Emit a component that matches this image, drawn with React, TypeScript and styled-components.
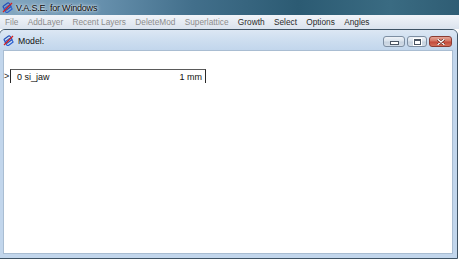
import React from "react";
import styled, { createGlobalStyle } from "styled-components";

const GlobalStyle = createGlobalStyle`
  html, body {
    margin: 0;
    padding: 0;
    background: #ffffff;
  }
  body {
    width: 459px;
    height: 261px;
    overflow: hidden;
    font-family: "Liberation Sans", Arial, sans-serif;
  }
`;

const Frame = styled.div`
  width: 459px;
  height: 261px;
  display: flex;
  flex-direction: column;
  overflow: hidden;
  background: #ffffff;
`;

const TitleBar = styled.div`
  height: 15px;
  display: flex;
  align-items: center;
  gap: 3px;
  padding-left: 2px;
  background: linear-gradient(
    to right,
    #86a9c2 0%,
    #6a93b0 20%,
    #426f8b 42%,
    #2c5b73 65%,
    #3a6b82 85%,
    #2f5d74 100%
  );
`;

const TitleText = styled.span`
  font-size: 9px;
  letter-spacing: -0.2px;
  color: #0a0a0a;
  text-shadow: 0 0 4px rgba(255, 255, 255, 0.9), 0 0 2px rgba(255, 255, 255, 0.9);
  white-space: nowrap;
`;

const MenuBar = styled.div`
  height: 14px;
  display: flex;
  align-items: center;
  gap: 9.3px;
  padding-left: 5px;
  background: linear-gradient(to bottom, #f1f4f9 0%, #e4eaf2 60%, #dbe3ee 100%);
`;

const MenuItem = styled.span<{ $disabled?: boolean }>`
  font-size: 8.3px;
  font-weight: 400;
  color: ${(p) => (p.$disabled ? "#8c8c8c" : "#2a2a2a")};
  white-space: nowrap;
`;

const Workspace = styled.div`
  flex: 1;
  display: flex;
  flex-direction: column;
  background: #ffffff;
`;

const MdiChild = styled.div`
  box-sizing: border-box;
  margin-left: -1px;
  width: 459px;
  height: 230px;
  border: 1px solid #3f5364;
  border-radius: 6px 6px 0 0;
  background: #c2d6ec;
  display: flex;
  flex-direction: column;
  padding: 0 4px 4px 3px;
`;

const ChildCaption = styled.div`
  height: 20px;
  margin: 0 -4px 0 -3px;
  padding: 0 5px 0 3px;
  display: flex;
  align-items: center;
  gap: 4px;
  border-radius: 5px 5px 0 0;
  background: linear-gradient(to bottom, #dce7f4 0%, #cfdff0 45%, #c2d6ec 100%);
`;

const CaptionText = styled.span`
  font-size: 8.7px;
  color: #111;
  flex: 1;
  padding-top: 1px;
`;

const CaptionButtons = styled.div`
  display: flex;
  gap: 2px;
  align-items: center;
  margin-top: 3px;
`;

const CaptionButton = styled.div<{ $close?: boolean; $w: number }>`
  box-sizing: border-box;
  width: ${(p) => p.$w}px;
  height: 11px;
  border: 1px solid ${(p) => (p.$close ? "#8a3c33" : "#7d8ea2")};
  border-radius: 3px;
  display: flex;
  align-items: center;
  justify-content: center;
  background: ${(p) =>
    p.$close
      ? "linear-gradient(to bottom, #e3a496 0%, #d47563 45%, #c2493a 55%, #d3705a 100%)"
      : "linear-gradient(to bottom, #eef2f7 0%, #dae3ed 45%, #c6d2df 55%, #d3dde8 100%)"};
`;

const MinGlyph = styled.div`
  width: 7px;
  height: 2px;
  background: #ffffff;
  border: 1px solid #4a5563;
  margin-top: 3px;
`;

const MaxGlyph = styled.div`
  width: 5px;
  height: 3px;
  border: 1px solid #4a5563;
  border-top-width: 2px;
  background: #ffffff;
  box-shadow: 0 0 0 1px #ffffff;
`;

const ClientArea = styled.div`
  flex: 1;
  background: #ffffff;
  border: 1px solid #a9bdd2;
  box-sizing: border-box;
  padding-top: 18px;
`;

const LayerRow = styled.div`
  display: flex;
  align-items: flex-start;
  height: 14px;
`;

const Pointer = styled.span`
  width: 6px;
  font-size: 9px;
  color: #222;
  line-height: 13px;
  padding-top: 1px;
`;

const LayerBox = styled.div`
  box-sizing: border-box;
  width: 196px;
  height: 14px;
  border: 1px solid #2a2a2a;
  border-bottom: none;
  border-top-color: #5a5a5a;
  display: flex;
  justify-content: space-between;
  align-items: center;
  padding: 1px 3px 0 6px;
  font-size: 9px;
  color: #111;
`;

const AppIcon = () => (
  <svg width="11" height="11" viewBox="0 0 11 11">
    <rect x="1.5" y="2" width="7" height="5" rx="1" transform="rotate(-35 5 4.5)" fill="none" stroke="#2450b8" strokeWidth="1.2" />
    <rect x="2.5" y="4.5" width="7" height="5" rx="1" transform="rotate(-35 6 7)" fill="none" stroke="#2a5fd0" strokeWidth="1.2" />
    <line x1="1" y1="10" x2="10" y2="1" stroke="#d42020" strokeWidth="1.3" />
  </svg>
);

const CloseGlyph = () => (
  <svg width="8" height="6" viewBox="0 0 8 6">
    <path d="M1 0.5 L7 5.5 M7 0.5 L1 5.5" stroke="#5a1a14" strokeWidth="2.6" strokeLinecap="round" />
    <path d="M1 0.5 L7 5.5 M7 0.5 L1 5.5" stroke="#ffffff" strokeWidth="1.4" strokeLinecap="round" />
  </svg>
);

const menus: { label: string; disabled: boolean }[] = [
  { label: "File", disabled: true },
  { label: "AddLayer", disabled: true },
  { label: "Recent Layers", disabled: true },
  { label: "DeleteMod", disabled: true },
  { label: "Superlattice", disabled: true },
  { label: "Growth", disabled: false },
  { label: "Select", disabled: false },
  { label: "Options", disabled: false },
  { label: "Angles", disabled: false },
];

export default function App() {
  return (
    <>
      <GlobalStyle />
      <Frame>
        <TitleBar>
          <AppIcon />
          <TitleText>V.A.S.E. for Windows</TitleText>
        </TitleBar>
        <MenuBar>
          {menus.map((m) => (
            <MenuItem key={m.label} $disabled={m.disabled}>
              {m.label}
            </MenuItem>
          ))}
        </MenuBar>
        <Workspace>
          <MdiChild>
            <ChildCaption>
              <AppIcon />
              <CaptionText>Model:</CaptionText>
              <CaptionButtons>
                <CaptionButton $w={22}>
                  <MinGlyph />
                </CaptionButton>
                <CaptionButton $w={20}>
                  <MaxGlyph />
                </CaptionButton>
                <CaptionButton $w={23} $close>
                  <CloseGlyph />
                </CaptionButton>
              </CaptionButtons>
            </ChildCaption>
            <ClientArea>
              <LayerRow>
                <Pointer>&gt;</Pointer>
                <LayerBox>
                  <span>0 si_jaw</span>
                  <span>1 mm</span>
                </LayerBox>
              </LayerRow>
            </ClientArea>
          </MdiChild>
        </Workspace>
      </Frame>
    </>
  );
}
